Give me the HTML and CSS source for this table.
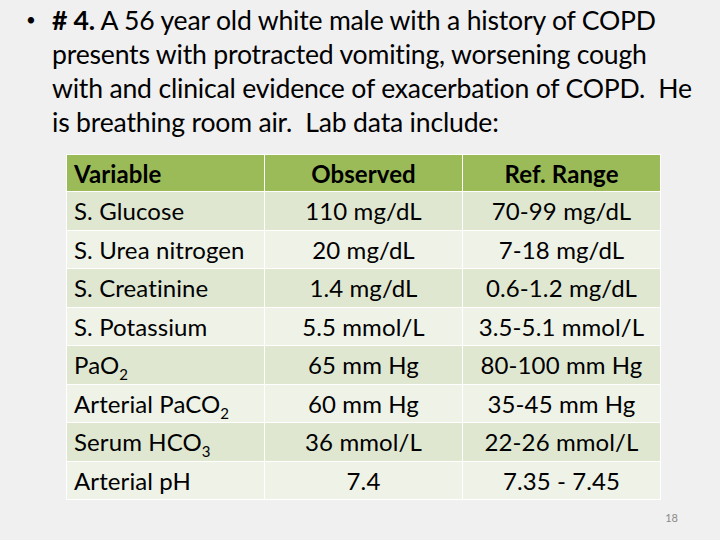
FILE: index.html
```html
<!DOCTYPE html>
<html>
<head>
<meta charset="utf-8">
<link rel="stylesheet" href="styles.css">
</head>
<body>
<div class="slide">
  <div class="bullet-item">
    <span class="bullet">•</span>
    <p class="para"><b># 4.</b> A 56 year old white male with a history of COPD<br>presents with protracted vomiting, worsening cough<br>with and clinical evidence of exacerbation of COPD.&nbsp; He<br>is breathing room air.&nbsp; Lab data include:</p>
  </div>
  <table class="labs">
    <thead>
      <tr><th class="var">Variable</th><th>Observed</th><th>Ref. Range</th></tr>
    </thead>
    <tbody>
      <tr class="band"><td class="var">S. Glucose</td><td>110 mg/dL</td><td>70-99 mg/dL</td></tr>
      <tr><td class="var">S. Urea nitrogen</td><td>20 mg/dL</td><td>7-18 mg/dL</td></tr>
      <tr class="band"><td class="var">S. Creatinine</td><td>1.4 mg/dL</td><td>0.6-1.2 mg/dL</td></tr>
      <tr><td class="var">S. Potassium</td><td>5.5 mmol/L</td><td>3.5-5.1 mmol/L</td></tr>
      <tr class="band"><td class="var">PaO<sub>2</sub></td><td>65 mm Hg</td><td>80-100 mm Hg</td></tr>
      <tr><td class="var">Arterial PaCO<sub>2</sub></td><td>60 mm Hg</td><td>35-45 mm Hg</td></tr>
      <tr class="band"><td class="var">Serum HCO<sub>3</sub></td><td>36 mmol/L</td><td>22-26 mmol/L</td></tr>
      <tr><td class="var">Arterial pH</td><td>7.4</td><td>7.35 - 7.45</td></tr>
    </tbody>
  </table>
  <div class="page-num">18</div>
</div>
</body>
</html>
```

FILE: styles.css
```css
html, body {
  margin: 0;
  padding: 0;
  background: #f0f0f0;
}
.slide {
  width: 720px;
  height: 540px;
  position: relative;
  font-family: Lato, "Open Sans", sans-serif;
  color: #000;
  overflow: hidden;
}
.bullet-item {
  display: flex;
  padding: 3px 0 0 26px;
}
.bullet {
  width: 26px;
  font-size: 17px;
  line-height: 34px;
  flex: none;
}
.para {
  margin: 0;
  width: 670px;
  font-size: 26.6px;
  line-height: 34px;
  letter-spacing: -0.2px;
  white-space: nowrap;
}
.para b {
  font-weight: 700;
}
.labs {
  margin: 15px 0 0 66px;
  border-collapse: collapse;
  font-size: 24px;
  letter-spacing: 0.1px;
}
.labs th, .labs td {
  width: 198px;
  height: 38.5px;
  padding: 0 7px;
  box-sizing: border-box;
  border: 1px solid #ffffff;
  text-align: center;
  vertical-align: middle;
  background: #eef2e7;
}
.labs th {
  background: #9bbb59;
  font-weight: 700;
  height: 37px;
}
.labs .var {
  text-align: left;
}
.labs tr.band td {
  background: #dfe7d1;
}
.labs sub {
  font-size: 15px;
  line-height: 0;
  vertical-align: -6px;
}
.page-num {
  position: absolute;
  right: 42px;
  bottom: 16px;
  font-size: 11px;
  color: #8a8a8a;
}
```
